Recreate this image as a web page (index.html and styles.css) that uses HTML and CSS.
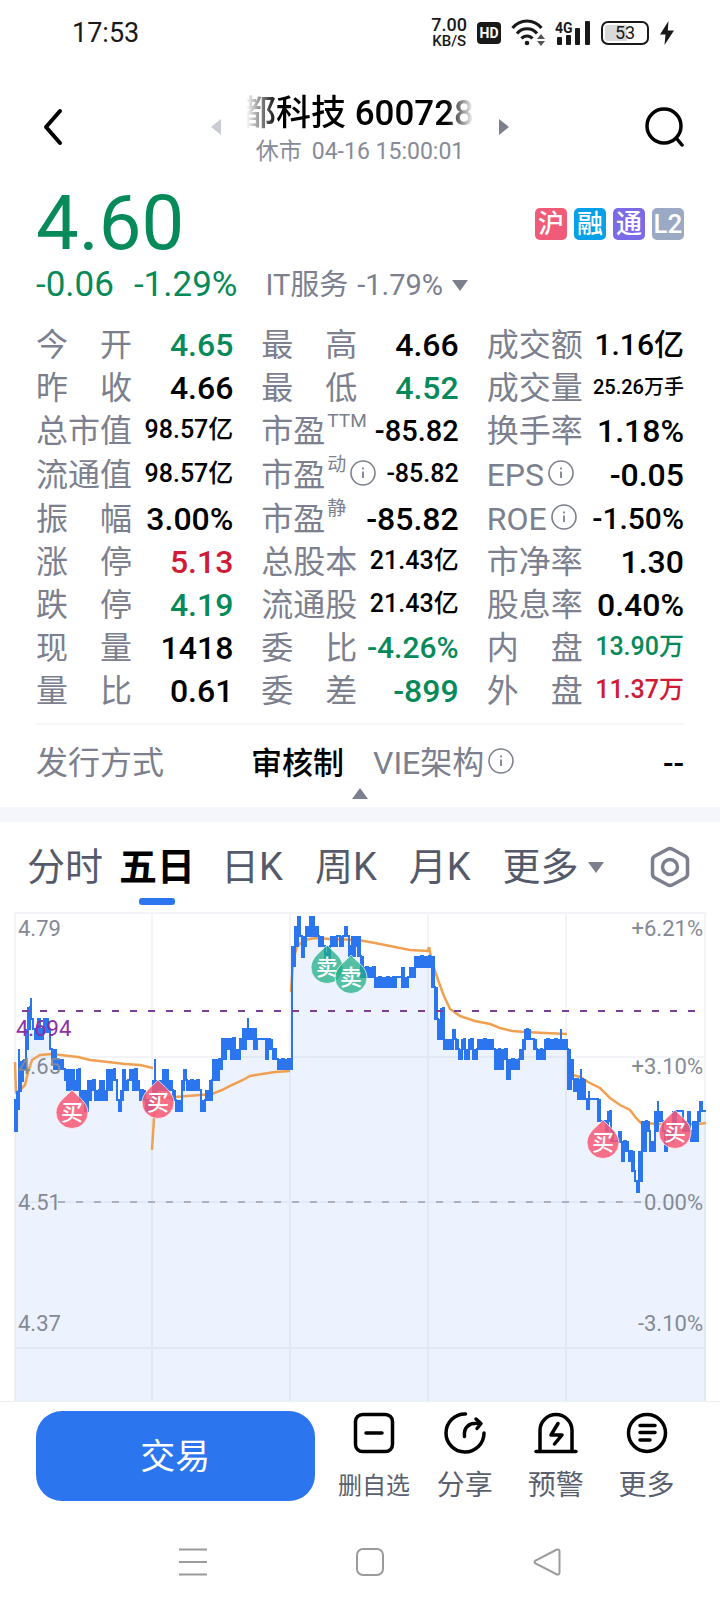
FILE: index.html
```html
<!DOCTYPE html>
<html lang="zh-CN">
<head>
    <meta charset="UTF-8">
    <meta name="viewport" content="width=device-width, initial-scale=1.0">
    <title>都科技 600728</title>
    <link rel="stylesheet" href="styles.css">
</head>
<body>
    <svg class="defs" aria-hidden="true">
        <symbol id="info" viewBox="0 0 26 26">
            <circle cx="13" cy="13" r="12" fill="none" stroke="currentColor" stroke-width="1.6"/>
            <path d="M13 11.5v6.5M13 7.5v2" stroke="currentColor" stroke-width="1.8"/>
        </symbol>
        <symbol id="drop" viewBox="-18 -2 36 42">
            <path d="M0 0C5 6 16 12 16 22.500A16 16 0 0 1 -16 22.500C-16 12 -5 6 0 0Z" stroke="#fff" stroke-opacity=".7"/>
        </symbol>
    </svg>

    <div class="status">
        <span class="time">17:53</span>
        <div class="status-icons">
            <div class="speed"><span>7.00</span><small>KB/S</small></div>
            <span class="hd">HD</span>
            <svg width="34" height="28" viewBox="0 0 34 28" fill="none" stroke="#191919" stroke-width="3">
                <path d="M1.500 9C9-.5 23-.5 30.500 9M6 14.500C11 8 21 8 26 14.500M10.500 19.500C13.500 16 18.500 16 21.500 19.500"/>
                <circle cx="16" cy="24" r="2.300" fill="#191919" stroke="none"/>
                <path d="M26 20l4-5 4 5zM26 22l4 5 4-5z" fill="#555" stroke="none"/>
            </svg>
            <svg class="signal" width="36" height="28" viewBox="0 0 36 28" fill="#191919">
                <text x="0" y="14">4G</text>
                <rect x="2" y="18" width="5" height="8" rx="1"/>
                <rect x="11" y="16" width="5" height="10" rx="1"/>
                <rect x="20" y="9" width="5" height="17" rx="1"/>
                <rect x="30" y="2" width="5" height="24" rx="1"/>
            </svg>
            <span class="battery">53</span>
            <svg width="16" height="24" viewBox="0 0 16 24" fill="#191919">
                <path d="M9.500 0L1 13.500h5.500L5.500 24 15 9.500H8.800z"/>
            </svg>
        </div>
    </div>

    <header class="header">
        <button class="icon-btn" aria-label="返回">
            <svg width="30" height="40" viewBox="0 0 30 40" fill="none" stroke="#000" stroke-width="4" stroke-linecap="round" stroke-linejoin="round">
                <path d="M25 4L11 20l14 16"/>
            </svg>
        </button>
        <div class="switcher">
            <button class="icon-btn" aria-label="上一只">
                <svg width="12" height="16" viewBox="0 0 12 16"><path d="M11 0v16L1 8z" fill="#c9ccd3"/></svg>
            </button>
            <div class="heading">
                <h1 class="title">都科技 600728</h1>
                <p class="subtitle"><span>休市</span><span>04-16 15:00:01</span></p>
            </div>
            <button class="icon-btn" aria-label="下一只">
                <svg width="12" height="16" viewBox="0 0 12 16"><path d="M1 0v16l10-8z" fill="#7c808e"/></svg>
            </button>
        </div>
        <button class="icon-btn search" aria-label="搜索">
            <svg width="40" height="40" viewBox="0 0 40 40" fill="none" stroke="#000" stroke-width="3.500" stroke-linecap="round">
                <circle cx="19" cy="19" r="17"/><path d="M32 32l5 6"/>
            </svg>
        </button>
    </header>

    <section class="quote">
        <div class="price-row">
            <span class="price down">4.60</span>
            <ul class="badges">
                <li class="badge sh">沪</li>
                <li class="badge margin">融</li>
                <li class="badge connect">通</li>
                <li class="badge level">L2</li>
            </ul>
        </div>
        <div class="change-row">
            <span class="down">-0.06</span>
            <span class="down">-1.29%</span>
            <button class="sector">
                <span>IT服务</span>
                <span>-1.79%</span>
                <svg width="16" height="11" viewBox="0 0 16 11"><path d="M0 0h16L8 11z" fill="#7c808e"/></svg>
            </button>
        </div>

        <dl class="stats">
            <div><dt>今开</dt><dd class="down">4.65</dd></div>
            <div><dt>最高</dt><dd>4.66</dd></div>
            <div><dt>成交额</dt><dd class="md">1.16亿</dd></div>

            <div><dt>昨收</dt><dd>4.66</dd></div>
            <div><dt>最低</dt><dd class="down">4.52</dd></div>
            <div><dt>成交量</dt><dd class="xs">25.26万手</dd></div>

            <div><dt>总市值</dt><dd class="sm">98.57亿</dd></div>
            <div><dt class="free">市盈<sup>TTM</sup></dt><dd class="fit">-85.82</dd></div>
            <div><dt>换手率</dt><dd>1.18%</dd></div>

            <div class="tall"><dt>流通值</dt><dd class="sm">98.57亿</dd></div>
            <div class="tall"><dt class="free">市盈<sup>动</sup><svg class="info"><use href="#info"/></svg></dt><dd class="sm">-85.82</dd></div>
            <div class="tall"><dt class="free">EPS<svg class="info"><use href="#info"/></svg></dt><dd>-0.05</dd></div>

            <div><dt>振幅</dt><dd>3.00%</dd></div>
            <div><dt class="free">市盈<sup>静</sup></dt><dd>-85.82</dd></div>
            <div><dt class="free">ROE<svg class="info"><use href="#info"/></svg></dt><dd class="md">-1.50%</dd></div>

            <div><dt>涨停</dt><dd class="up">5.13</dd></div>
            <div><dt>总股本</dt><dd class="sm">21.43亿</dd></div>
            <div><dt>市净率</dt><dd>1.30</dd></div>

            <div><dt>跌停</dt><dd class="down">4.19</dd></div>
            <div><dt>流通股</dt><dd class="sm">21.43亿</dd></div>
            <div><dt>股息率</dt><dd>0.40%</dd></div>

            <div><dt>现量</dt><dd>1418</dd></div>
            <div><dt>委比</dt><dd class="md down">-4.26%</dd></div>
            <div><dt>内盘</dt><dd class="sm down">13.90万</dd></div>

            <div><dt>量比</dt><dd>0.61</dd></div>
            <div><dt>委差</dt><dd class="down">-899</dd></div>
            <div><dt>外盘</dt><dd class="sm up">11.37万</dd></div>
        </dl>

        <dl class="issue">
            <div><dt>发行方式</dt><dd>审核制</dd></div>
            <div><dt>VIE架构<svg class="info"><use href="#info"/></svg></dt><dd>--</dd></div>
        </dl>
        <button class="collapse" aria-label="收起">
            <svg width="16" height="11" viewBox="0 0 16 11"><path d="M0 11h16L8 0z" fill="#7c808e"/></svg>
        </button>
    </section>

    <nav class="tabs">
        <button class="tab">分时</button>
        <button class="tab active">五日</button>
        <button class="tab">日K</button>
        <button class="tab">周K</button>
        <button class="tab">月K</button>
        <button class="tab">更多
            <svg width="16" height="11" viewBox="0 0 16 11"><path d="M0 0h16L8 11z" fill="#7c808e"/></svg>
        </button>
        <button class="icon-btn settings" aria-label="设置">
            <svg width="40" height="42" viewBox="0 0 40 42" fill="none" stroke="#7c808e" stroke-width="3.500" stroke-linejoin="round">
                <path d="M17.500 3.200Q20 1.800 22.500 3.200L35 10Q37.500 11.400 37.500 14V28Q37.500 30.600 35 32L22.500 38.800Q20 40.200 17.500 38.800L5 32Q2.500 30.600 2.500 28V14Q2.500 11.400 5 10Z"/>
                <circle cx="20" cy="21" r="7.500"/>
            </svg>
        </button>
    </nav>

    <svg class="chart" viewBox="0 0 720 489" role="img" aria-label="五日走势">
        <path id="area" class="area"/>
        <path class="grid" d="M14 1H707M15 1V489M152 1V489M290 1V489M428 1V489M566 1V489M705 1V489M15 145H705M15 290H705M15 436H705"/>
        <path class="zero" d="M58 290H645"/>
        <path id="avg" class="avg"/>
        <path id="line" class="line"/>
        <path class="cost" d="M22 99H697"/>
        <g id="markers"></g>
        <g class="axis">
            <text x="18" y="24">4.79</text>
            <text x="18" y="162">4.65</text>
            <text x="18" y="298">4.51</text>
            <text x="18" y="419">4.37</text>
            <text class="cost-label" x="16" y="124">4.694</text>
        </g>
        <g class="axis right">
            <text x="703" y="24">+6.21%</text>
            <text x="703" y="162">+3.10%</text>
            <text x="703" y="298">0.00%</text>
            <text x="703" y="419">-3.10%</text>
        </g>
    </svg>

    <footer class="actions">
        <button class="trade">交易</button>
        <div class="action-list">
            <button class="action">
                <svg width="44" height="44" viewBox="0 0 44 44"><rect x="3.500" y="3.500" width="37" height="37" rx="7"/><path d="M14 22h16"/></svg>
                <span class="long">删自选</span>
            </button>
            <button class="action">
                <svg width="44" height="44" viewBox="0 0 44 44"><path d="M22.500 3A19 19 0 1 0 41 22M21.500 25.500C20.500 16 26 11.500 36 12.500M33 8l5 4.500-4 5"/></svg>
                <span>分享</span>
            </button>
            <button class="action">
                <svg width="44" height="44" viewBox="0 0 44 44"><path d="M2 40.500h40M6 40V19.500a16 16 0 0 1 32 0V40M24 12.500l-7 11.500h11l-7.500 9"/></svg>
                <span>预警</span>
            </button>
            <button class="action">
                <svg width="44" height="44" viewBox="0 0 44 44"><circle cx="22" cy="22" r="18.500"/><path d="M15 14.500h15M15 21.500h15M15 29h10"/></svg>
                <span>更多</span>
            </button>
        </div>
    </footer>

    <div class="system-nav">
        <button class="icon-btn" aria-label="最近任务">
            <svg width="28" height="28" viewBox="0 0 28 28"><path d="M0 1.500h28M0 14h28M0 26.500h28"/></svg>
        </button>
        <button class="icon-btn" aria-label="主页">
            <svg width="28" height="28" viewBox="0 0 28 28"><rect x="1" y="1" width="26" height="26" rx="6"/></svg>
        </button>
        <button class="icon-btn" aria-label="后退">
            <svg width="28" height="28" viewBox="0 0 28 28"><path d="M24 1.500L2.500 12.500q-2 1.500 0 3L24 26.500q2.500.5 2.500-2V3.500q0-2.500-2.500-2z"/></svg>
        </button>
    </div>

    <script src="chart.js"></script>
</body>
</html>
```
FILE: styles.css
```css
* {
    box-sizing: border-box;
}
body {
    margin: 0;
    min-height: 100vh;
    display: flex;
    flex-direction: column;
    background-color: #fff;
    color: #000;
    font-family: Roboto, "Noto Sans CJK SC", sans-serif;
}
button {
    padding: 0;
    border: 0;
    background: none;
    color: inherit;
    font: inherit;
    cursor: pointer;
}
svg {
    display: block;
    flex: none;
}
dl, dd, ul, h1, p {
    margin: 0;
    padding: 0;
}
.defs {
    width: 0;
    height: 0;
    position: absolute;
}
.icon-btn {
    display: flex;
}
.down { color: #068a5a; }
.up { color: #cf1b35; }

/* status bar */
.status {
    height: 66px;
    padding: 0 45px 0 72px;
    display: flex;
    justify-content: space-between;
    align-items: center;
    color: #191919;
}
.time {
    font-size: 27px;
}
.status-icons {
    display: flex;
    align-items: center;
    gap: 10px;
}
.speed {
    display: flex;
    flex-direction: column;
    align-items: center;
    font-size: 18px;
    line-height: 16px;
    font-weight: 500;
}
.speed small {
    font-size: 15px;
}
.hd {
    width: 24px;
    border-radius: 4px;
    background-color: #191919;
    color: #fff;
    font-size: 14px;
    line-height: 22px;
    font-weight: 700;
    text-align: center;
}
.signal text {
    font-size: 14px;
    font-weight: 700;
}
.battery {
    width: 48px;
    border: 2px solid #191919;
    border-radius: 7px;
    background: linear-gradient(90deg, #d9d9d9 55%, #fff 55%);
    box-shadow: inset 0 0 0 2px #fff;
    font-size: 18px;
    line-height: 20px;
    text-align: center;
}

/* header */
.header {
    padding: 21px 35px 15px;
    display: grid;
    grid-template-columns: 1fr auto 1fr;
    align-items: center;
}
.search {
    justify-self: end;
}
.switcher {
    display: flex;
    align-items: center;
    gap: 24px;
}
.heading {
    width: 228px;
    padding-top: 4px;
    white-space: nowrap;
}
.title {
    display: flex;
    justify-content: flex-end;
    overflow: hidden;
    font-size: 35px;
    line-height: 46px;
    font-weight: 500;
    -webkit-mask-image: linear-gradient(90deg, transparent, #000 14%, #000 88%, transparent);
    mask-image: linear-gradient(90deg, transparent, #000 14%, #000 88%, transparent);
}
.subtitle {
    display: flex;
    justify-content: center;
    gap: 10px;
    font-size: 23px;
    line-height: 30px;
    color: #878b98;
}

/* quote */
.quote {
    padding: 0 36px;
    border-bottom: 15px solid #f4f6fb;
}
.price-row {
    display: flex;
    justify-content: space-between;
    align-items: center;
}
.price {
    font-size: 76px;
    line-height: 82px;
}
.badges {
    padding-top: 2px;
    display: flex;
    gap: 7px;
    list-style: none;
}
.badge {
    width: 32px;
    border-radius: 5px;
    color: #fff;
    font-size: 26px;
    line-height: 32px;
    font-weight: 500;
    text-align: center;
}
.sh { background-color: #f05c78; }
.margin { background-color: #06a0e8; }
.connect { background-color: #7c6be6; }
.level { background-color: #9aaac4; }
.change-row {
    display: flex;
    align-items: center;
    gap: 20px;
    font-size: 35px;
    line-height: 42px;
}
.sector {
    display: flex;
    align-items: center;
    gap: 9px;
    margin-left: 8px;
    font-size: 29px;
    color: #7c808e;
}

/* key figures */
.stats {
    margin-top: 17px;
    padding-bottom: 11px;
    display: grid;
    grid-template-columns: repeat(3, 1fr);
    column-gap: 28px;
    border-bottom: 2px solid #f5f6f8;
}
.stats div {
    height: 43px;
    display: flex;
    justify-content: space-between;
    align-items: center;
    white-space: nowrap;
}
.stats .tall {
    height: 45px;
}
dt {
    color: #7c808e;
    font-size: 32px;
    line-height: 40px;
}
.stats dt {
    width: 96px;
    text-align-last: justify;
}
.stats .free {
    width: auto;
    display: flex;
    align-items: center;
    text-align-last: auto;
}
.stats sup {
    align-self: flex-start;
    margin-left: 2px;
    font-size: 19px;
    line-height: 19px;
}
.info {
    width: 26px;
    height: 26px;
    margin: 0 0 4px 4px;
}
dd {
    font-size: 32px;
    line-height: 40px;
    font-weight: 500;
}
.md { font-size: 30px; }
.fit { font-size: 29px; }
.sm { font-size: 25px; }
.xs { font-size: 20px; }
.sm, .xs { padding-bottom: 2px; }
.issue {
    padding-top: 17px;
    display: grid;
    grid-template-columns: 308px 1fr;
    column-gap: 29px;
}
.issue div, .issue dt {
    display: flex;
    justify-content: space-between;
    align-items: center;
}
.issue dd {
    padding-top: 2px;
    font-size: 31px;
}
.collapse {
    display: block;
    margin: 4px auto 8px;
}

/* period tabs */
.tabs {
    height: 90px;
    padding: 0 30px 0 27px;
    display: flex;
    align-items: center;
    gap: 32px;
    color: #555a6b;
}
.tab {
    display: flex;
    align-items: center;
    gap: 9px;
    font-size: 38px;
    line-height: 90px;
    white-space: nowrap;
}
.active {
    position: relative;
    margin: 0 -6px 0 -16px;
    color: #000;
    font-weight: 700;
}
.active::after {
    content: "";
    position: absolute;
    bottom: 7px;
    left: 50%;
    width: 36px;
    height: 7px;
    border-radius: 3px;
    background-color: #2b76ee;
    transform: translateX(-50%);
}
.settings {
    margin-left: auto;
}

/* five day chart */
.chart {
    width: 100%;
    height: auto;
}
.chart path {
    fill: none;
}
.chart .area {
    fill: #ecf3fe;
}
.grid {
    stroke: #8c96b4;
    stroke-opacity: .1;
    stroke-width: 2;
}
.zero {
    stroke: #aab1c4;
    stroke-width: 2;
    stroke-dasharray: 7 11;
}
.cost {
    stroke: #7b3f98;
    stroke-width: 2;
    stroke-dasharray: 7 11;
}
.avg {
    stroke: #f0a050;
    stroke-width: 2.5;
}
.line {
    stroke: #2b76ee;
    stroke-width: 2;
}
.axis {
    font-size: 22px;
    fill: #858996;
}
.axis .cost-label {
    fill: #8a2fa8;
}
.right {
    text-anchor: end;
}
.marker {
    fill: #fff;
    font-size: 22px;
    font-weight: 500;
    text-anchor: middle;
}
#drop path {
    fill: inherit;
}
.marker .buy {
    fill: rgba(249, 86, 115, .85);
}
.marker .sell {
    fill: rgba(32, 173, 133, .75);
}

/* bottom bar */
.actions {
    padding: 9px 28px 11px 36px;
    display: flex;
    gap: 14px;
    border-top: 1px solid #eef0f3;
}
.trade {
    flex: 279;
    padding-top: 3px;
    border-radius: 26px;
    background-color: #2b76ee;
    color: #fff;
    font-size: 35px;
    line-height: 87px;
}
.action-list {
    flex: 364;
    display: grid;
    grid-template-columns: repeat(4, 1fr);
}
.action {
    display: flex;
    flex-direction: column;
    align-items: center;
    justify-content: space-between;
    color: #5a5f70;
    font-size: 28px;
    line-height: 30px;
    white-space: nowrap;
}
.action svg {
    fill: none;
    stroke: #000;
    stroke-width: 3.5;
    stroke-linecap: round;
    stroke-linejoin: round;
}
.long {
    font-size: 24px;
}
.system-nav {
    flex: 1;
    padding: 0 159px 0 179px;
    display: flex;
    justify-content: space-between;
    align-items: center;
}
.system-nav svg {
    fill: none;
    stroke: #9b9b9b;
    stroke-width: 2;
}
```
FILE: chart.js
```js
// [x, top, bottom] of the traded range
const ranges = [
    [15,187,219],[17,179,197],[19,137,179],[21,149,169],[24,147,157],[26,117,137],[28,95,117],[31,86,107],
    [33,106,117],[35,116,127],[38,106,127],[41,116,127],[44,106,120],[48,106,117],[50,116,137],[52,137,147],
    [54,137,157],[57,147,157],[61,147,157],[65,157,168],[67,157,178],[70,157,168],[72,157,178],[75,168,178],
    [77,157,178],[80,178,188],[85,178,199],[88,168,188],[91,168,178],[95,178,188],[100,168,188],[105,178,188],
    [107,157,178],[112,157,168],[115,157,168],[117,178,188],[119,188,199],[121,178,188],[123,157,178],
    [126,168,178],[130,157,168],[133,157,178],[137,168,178],[140,178,188],[143,178,188],[146,188,199],
    [150,188,199],[153,168,188],[155,147,188],[157,168,178],[161,168,178],[163,157,178],[166,157,178],
    [170,168,178],[173,178,188],[176,188,199],[180,188,199],[182,168,178],[184,157,168],[187,168,178],
    [199,168,178],[201,178,199],[203,188,199],[206,178,188],[210,168,188],[213,147,168],[217,147,168],
    [220,147,157],[222,126,147],[226,126,137],[231,126,147],[236,137,147],[240,126,137],[243,116,137],
    [246,116,127],[248,106,127],[250,116,127],[254,116,137],[257,127,127],[264,127,127],[266,127,147],
    [270,127,137],[273,137,147],[276,137,147],[278,147,157],[290,147,157],[292,34,54],[295,14,34],[298,4,24],
    [300,4,24],[302,24,45],[304,24,34],[306,14,24],[310,4,24],[314,4,24],[316,14,24],[319,24,34],[323,24,34],
    [325,40,50],[328,34,50],[331,24,34],[337,24,24],[340,24,34],[343,24,24],[345,14,24],[347,14,24],
    [349,34,44],[352,24,44],[355,24,34],[358,24,44],[361,44,65],[364,55,65],[371,55,65],[375,55,75],
    [377,65,75],[394,65,75],[396,65,65],[402,55,75],[406,65,75],[410,55,65],[413,55,65],[415,44,55],
    [430,44,55],[432,44,75],[435,75,107],[438,107,127],[441,96,127],[444,127,137],[450,127,137],[453,117,127],
    [456,127,137],[459,137,147],[462,127,137],[465,137,147],[469,127,137],[473,137,147],[478,127,137],
    [491,127,137],[495,137,157],[500,137,157],[503,137,147],[507,147,167],[510,147,157],[517,147,157],
    [520,137,147],[523,127,137],[525,117,127],[528,117,127],[531,127,127],[534,127,137],[537,137,147],
    [542,137,147],[545,127,137],[559,127,137],[561,117,137],[563,127,137],[567,127,137],[568,137,177],
    [571,147,167],[574,167,179],[578,167,187],[581,157,167],[583,167,187],[587,187,197],[589,179,187],
    [591,187,187],[596,187,187],[598,187,209],[601,209,209],[606,209,219],[608,199,209],[611,219,229],
    [615,229,229],[619,219,230],[622,229,249],[626,229,239],[629,239,249],[632,239,259],[635,259,269],
    [637,269,280],[639,239,269],[642,209,239],[647,209,219],[650,219,239],[652,229,239],[655,199,219],
    [658,189,209],[660,199,209],[663,209,219],[665,229,239],[668,219,229],[673,199,219],[676,199,199],
    [681,199,199],[683,209,219],[686,209,219],[688,199,219],[691,219,229],[693,209,219],[695,209,229],
    [698,199,209],[700,189,199],[702,189,199],[703,199,199],[706,199,199]
];

// average price, one list per day
const averages = [
    [[15,150],[16,180],[20,178],[25,173],[28,160],[32,148],[40,143],[52,142],[78,145],[90,148],[108,150],[125,152],[140,153],[153,156]],
    [[152,238],[154,206],[156,187],[175,185],[200,183],[212,182],[222,178],[232,173],[243,168],[250,164],[262,162],[275,160],[290,159]],
    [[291,80],[293,50],[297,34],[305,28],[315,26],[330,27],[358,28],[375,31],[390,34],[410,38],[428,39],[429,35]],
    [[429,35],[432,50],[438,68],[444,84],[450,97],[460,104],[475,109],[490,112],[500,116],[512,119],[525,120],[545,121],[567,122]],
    [[568,145],[573,163],[580,165],[588,170],[600,176],[610,186],[620,193],[630,198],[636,206],[641,211],[660,212],[698,212],[706,211]]
];

const markers = [
    ['buy', '买', 72, 178],
    ['buy', '买', 158, 168],
    ['sell', '卖', 327, 33],
    ['sell', '卖', 351, 43],
    ['buy', '买', 603, 208],
    ['buy', '买', 675, 198]
];

function pricePath() {
    let d = '';
    ranges.forEach(([x, top, bottom], i) => {
        const end = i + 1 < ranges.length ? ranges[i + 1][0] : x + 1;
        // swing between both edges until the next range starts
        for (let px = x; px < end; px += 2) {
            d += d ? `H${px}` : `M${px} ${bottom}`;
            d += `V${top}`;
            if (px === x || (px * 13) % 7 < 5) d += `V${bottom}`;
        }
    });
    return d;
}

const price = pricePath();
document.getElementById('line').setAttribute('d', price);
document.getElementById('area').setAttribute('d', price + 'V489H15Z');
document.getElementById('avg').setAttribute('d', averages.map(day => 'M' + day.join('L')).join(''));

document.getElementById('markers').innerHTML = markers.map(([type, label, x, y]) => `
    <g class="marker" transform="translate(${x} ${y})">
        <use class="${type}" href="#drop" x="-18" y="-2" width="36" height="42"/>
        <text y="30">${label}</text>
    </g>`).join('');
```
